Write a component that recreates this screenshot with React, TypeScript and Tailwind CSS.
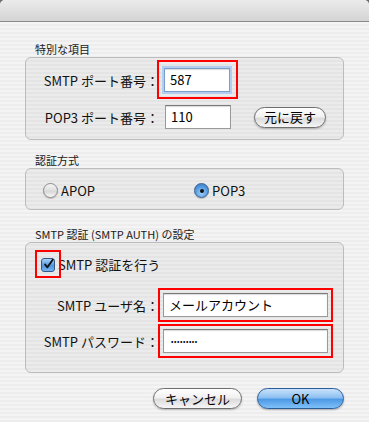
import React from 'react';

const font = { fontFamily: '"Noto Sans CJK JP", "Noto Sans", sans-serif' };

function GroupLabel({ children, mt }: { children: React.ReactNode; mt: string }) {
  return <div className={`${mt} h-[15px] pl-[10px] text-[11px] leading-[15px] text-[#1a1a1a]`}>{children}</div>;
}

function Field({ value, w, focused, red, small }: { value: string; w: string; focused?: boolean; red?: string; small?: boolean }) {
  return (
    <div className={`relative ${w} h-[24px] shrink-0`}>
      <div
        className={`h-full w-full bg-white border px-[5px] flex items-center ${
          focused
            ? 'border-[#7d9ec9] shadow-[0_0_0_2px_#b3cdee,inset_0_1px_1px_rgba(0,0,0,0.15)]'
            : 'border-[#9a9a9a] border-t-[#7a7a7a] shadow-[inset_0_1px_1px_rgba(0,0,0,0.15)]'
        } ${small ? 'text-[7px] tracking-[0.6px] pl-[7px] text-black' : 'text-[13px] text-black'}`}
      >
        {value}
      </div>
      {red && <div className={`absolute ${red} border-2 border-[#ff0000] pointer-events-none`} />}
    </div>
  );
}

function PillButton({ children, w, blue }: { children: React.ReactNode; w: string; blue?: boolean }) {
  return (
    <div
      className={`${w} h-[21px] rounded-full border flex items-center justify-center text-[13px] ${
        blue
          ? 'border-[#2a5d9a] bg-[linear-gradient(to_bottom,#c9e2fb_0%,#8ec0f2_45%,#4e9ae6_55%,#7fc0f8_100%)] shadow-[0_1px_2px_rgba(0,0,0,0.3)]'
          : 'border-[#6e6e6e] bg-[linear-gradient(to_bottom,#ffffff_0%,#f1f1f1_45%,#dcdcdc_55%,#f6f6f6_100%)] shadow-[0_1px_2px_rgba(0,0,0,0.25)]'
      } text-black`}
    >
      {children}
    </div>
  );
}

function Radio({ checked }: { checked?: boolean }) {
  return (
    <div
      className={`w-[15px] h-[15px] rounded-full border shrink-0 flex items-center justify-center ${
        checked
          ? 'border-[#3a5f8f] bg-[radial-gradient(circle_at_50%_70%,#9fd0fb_0%,#4f95dc_60%,#3777c4_100%)]'
          : 'border-[#8a8a8a] bg-[linear-gradient(to_bottom,#f6f6f6,#d9d9d9_60%,#fbfbfb)]'
      } shadow-[0_1px_1px_rgba(0,0,0,0.2)]`}
    >
      {checked && <div className="w-[4px] h-[4px] rounded-full bg-[#111]" />}
    </div>
  );
}

export default function App() {
  return (
    <div
      className="w-[369px] h-[422px] overflow-hidden bg-[#6b6b6b] text-[#111]"
      style={font}
    >
      <div className="h-full rounded-t-[5px] overflow-hidden bg-[repeating-linear-gradient(to_bottom,#ededed_0px,#ededed_2px,#f4f4f4_2px,#f4f4f4_4px)]">
        {/* title bar */}
        <div className="h-[22px] border-b border-[#8a8a8a] bg-[linear-gradient(to_bottom,#ebebeb,#d4d4d4)]" />

        <div className="pl-[25px] w-[344px]">
          {/* 特別な項目 */}
          <GroupLabel mt="mt-[20px]">特別な項目</GroupLabel>
          <div className="h-[83px] rounded-[6px] border border-[#bcbcbc] bg-black/[0.035] pt-[10px]">
            <div className="flex items-center h-[24px]">
              <div className="w-[133px] text-right text-[13px] leading-none">SMTP ポート番号：</div>
              <div className="ml-[5px]">
                <Field value="587" w="w-[66px]" focused red="-top-[8px] -bottom-[7px] -left-[7px] -right-[8px]" />
              </div>
            </div>
            <div className="flex items-center h-[24px] mt-[13px]">
              <div className="w-[133px] text-right text-[13px] leading-none">POP3 ポート番号：</div>
              <div className="ml-[6px]">
                <Field value="110" w="w-[66px]" />
              </div>
              <div className="ml-[23px]">
                <PillButton w="w-[72px]">元に戻す</PillButton>
              </div>
            </div>
          </div>

          {/* 認証方式 */}
          <GroupLabel mt="mt-[13px]">認証方式</GroupLabel>
          <div className="h-[42px] rounded-[6px] border border-[#bcbcbc] bg-black/[0.035] pt-[14px] pl-[17px]">
            <div className="flex items-center h-[15px] text-[13px]">
              <div className="flex items-center gap-[3px] w-[151px]">
                <Radio />
                <span>APOP</span>
              </div>
              <div className="flex items-center gap-[3px]">
                <Radio checked />
                <span>POP3</span>
              </div>
            </div>
          </div>

          {/* SMTP 認証 */}
          <GroupLabel mt="mt-[17px]">SMTP 認証 (SMTP AUTH) の設定</GroupLabel>
          <div className="h-[131px] rounded-[6px] border border-[#bcbcbc] bg-black/[0.035] pt-[15px]">
            <div className="flex items-center h-[14px] pl-[15px] text-[13px]">
              <div className="relative w-[14px] h-[14px] shrink-0">
                <div className="w-full h-full rounded-[3px] border border-[#34588a] bg-[linear-gradient(to_bottom,#a9d3fb,#4f95dc_55%,#74b6f3)] flex items-center justify-center">
                  <svg width="13" height="13" viewBox="0 0 13 13" className="-mt-[2px] ml-[1px]">
                    <path d="M2.5 6.5 L5.2 9.8 L11.5 0.8" fill="none" stroke="#111" strokeWidth="2.2" strokeLinecap="round" strokeLinejoin="round" />
                  </svg>
                </div>
                <div className="absolute -top-[8px] -bottom-[6px] -left-[6px] -right-[6px] border-2 border-[#ff0000] pointer-events-none" />
              </div>
              <span className="ml-[3px]">SMTP 認証を行う</span>
            </div>
            <div className="flex items-center h-[24px] mt-[21px]">
              <div className="w-[133px] text-right text-[13px] leading-none">SMTP ユーザ名：</div>
              <div className="ml-[4px]">
                <Field value="メールアカウント" w="w-[165px]" red="-inset-[5px]" />
              </div>
            </div>
            <div className="flex items-center h-[24px] mt-[12px]">
              <div className="w-[133px] text-right text-[13px] leading-none">SMTP パスワード：</div>
              <div className="ml-[4px]">
                <Field value="•••••••••" w="w-[165px]" small red="-inset-[5px]" />
              </div>
            </div>
          </div>

          {/* buttons */}
          <div className="flex justify-end gap-[15px] mt-[15px]">
            <PillButton w="w-[89px]">キャンセル</PillButton>
            <PillButton w="w-[87px]" blue>OK</PillButton>
          </div>
        </div>
      </div>
    </div>
  );
}
